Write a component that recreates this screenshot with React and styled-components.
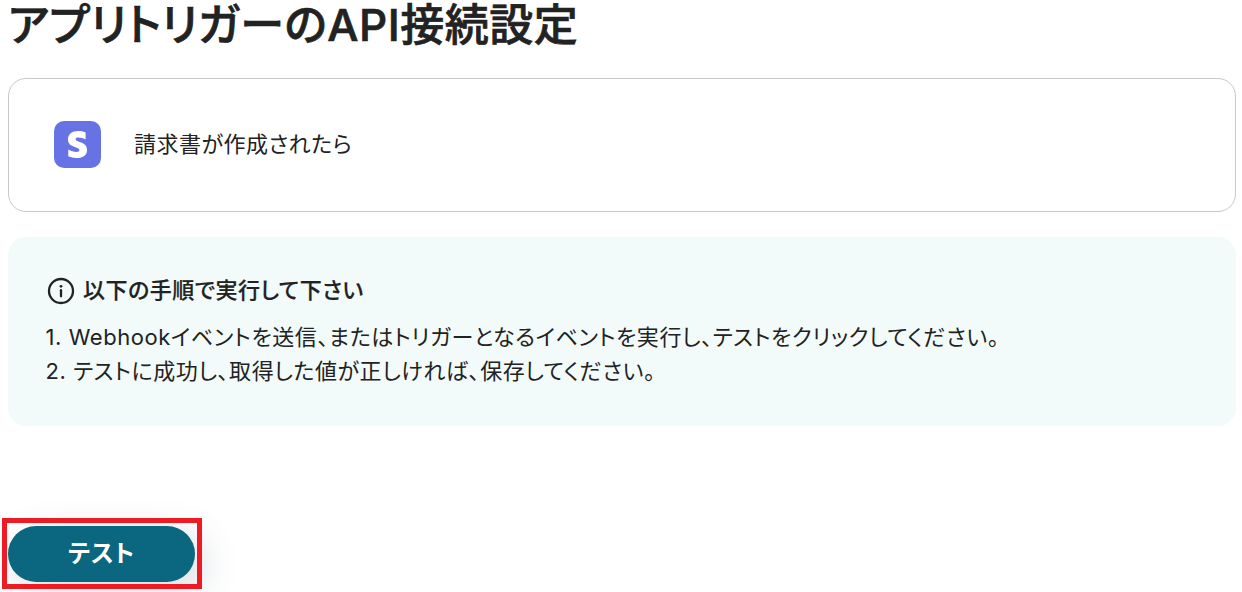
import React from "react";
import styled, { createGlobalStyle } from "styled-components";
import { FaStripeS } from "react-icons/fa";

const steps = [
  "1. Webhookイベントを送信、またはトリガーとなるイベントを実行し、テストをクリックしてください。",
  "2. テストに成功し、取得した値が正しければ、保存してください。",
];

const App = () => {
  return (
    <Page>
      <GlobalStyle />
      <Title>アプリトリガーのAPI接続設定</Title>
      <TriggerCard>
        <AppIcon>
          <FaStripeS />
        </AppIcon>
        <TriggerName>請求書が作成されたら</TriggerName>
      </TriggerCard>
      <Guide>
        <GuideHeading>
          <InfoIcon viewBox="0 0 28 28">
            <circle cx="14" cy="14" r="12" />
            <path d="M14 13.2v6.1" />
            <circle className="dot" cx="14" cy="9.3" r="1.4" />
          </InfoIcon>
          <GuideTitle>以下の手順で実行して下さい</GuideTitle>
        </GuideHeading>
        <Steps>
          {steps.map((step) => (
            <Step key={step}>{step}</Step>
          ))}
        </Steps>
      </Guide>
      <Actions>
        <TestButton>テスト</TestButton>
        <Highlight />
      </Actions>
    </Page>
  );
};

const GlobalStyle = createGlobalStyle`
  * {
    box-sizing: border-box;
    margin: 0;
    padding: 0;
  }
  body {
    background: #fff;
    color: #222;
    font-family: Inter, "Noto Sans CJK JP", sans-serif;
    font-feature-settings: "palt";
  }
`;
const Page = styled.main`
  height: 592px;
  padding: 0 6px 0 8px;
`;
const Title = styled.h1`
  height: 78px;
  font-size: 44px;
  font-weight: 500;
  line-height: 50px;
  letter-spacing: 0.52px;
  white-space: nowrap;
  -webkit-text-stroke: 0.7px #222;
`;
const TriggerCard = styled.section`
  display: flex;
  align-items: center;
  gap: 33px;
  height: 134px;
  padding: 0 45px 2px;
  border: 1px solid #c8c8c8;
  border-radius: 18px;
`;
const AppIcon = styled.div`
  display: flex;
  align-items: center;
  justify-content: center;
  width: 47px;
  height: 47px;
  border-radius: 10px;
  background: #6772e5;
  color: #fff;
  font-size: 27px;
`;
const TriggerName = styled.p`
  font-size: 22px;
  line-height: 34px;
  letter-spacing: 0.5px;
`;
const Guide = styled.section`
  height: 189px;
  margin-top: 25px;
  padding: 37px 37.5px;
  border-radius: 18px;
  background: #f2fbfa;
`;
const GuideHeading = styled.div`
  display: flex;
  align-items: center;
  gap: 8px;
  height: 34px;
`;
const InfoIcon = styled.svg`
  width: 28px;
  height: 28px;
  margin-left: 1.5px;
  fill: none;
  stroke: #222;
  stroke-width: 2.3;
  stroke-linecap: round;
  .dot {
    fill: #222;
    stroke: none;
  }
`;
const GuideTitle = styled.h2`
  padding-bottom: 2px;
  font-size: 22px;
  font-weight: 500;
  line-height: 32px;
  letter-spacing: 0.5px;
  -webkit-text-stroke: 0.2px #222;
`;
const Steps = styled.div`
  margin-top: 12px;
`;
const Step = styled.p`
  font-size: 22px;
  line-height: 34px;
  letter-spacing: 0.56px;
  white-space: nowrap;
`;
const Actions = styled.div`
  position: relative;
  width: 187px;
  margin-top: 100px;
`;
const TestButton = styled.button`
  display: block;
  width: 187px;
  height: 56px;
  padding-bottom: 6px;
  border: none;
  border-radius: 28px;
  background: #0b6780;
  box-shadow: 9px 9px 36px rgba(60, 80, 100, 0.2);
  color: #fff;
  font: inherit;
  font-feature-settings: "palt";
  font-size: 24px;
  font-weight: 600;
  letter-spacing: 0.6px;
`;
// sits over the button and its shadow
const Highlight = styled.div`
  position: absolute;
  top: -8px;
  left: -6px;
  width: 200px;
  height: 71px;
  border: 5px solid #ed1c24;
`;
export default App;
